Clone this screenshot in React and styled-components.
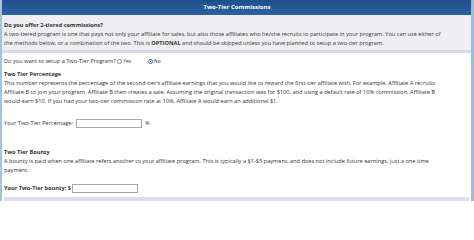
import React, { useState } from "react";
import styled, { createGlobalStyle } from "styled-components";

const GlobalStyle = createGlobalStyle`
  html, body {
    margin: 0;
    padding: 0;
    background: #fff;
  }
  body {
    font-family: "Open Sans", "DejaVu Sans", sans-serif;
    color: #333;
  }
`;

const Panel = styled.div`
  width: 474px;
  height: 201px;
  box-sizing: border-box;
  border-left: 2px solid #a9c3df;
  border-right: 3px solid #9dbbd9;
  display: flex;
  flex-direction: column;
  overflow: hidden;
  font-size: 5.65px;
  line-height: 9px;
`;

const Header = styled.div`
  height: 15px;
  flex-shrink: 0;
  display: flex;
  align-items: center;
  justify-content: center;
  background: linear-gradient(#1f4f8a, #2b62a1);
  color: #fff;
  font-weight: 700;
  font-size: 6px;
  margin: 0 -3px 0 -2px;
`;

const Intro = styled.div`
  background: #efeff2;
  border-bottom: 3px solid #d9d9ee;
  padding: 6px 2px 2px;
`;

const Body = styled.div`
  flex: 1;
  padding: 4px 2px 0;
  display: flex;
  flex-direction: column;
`;

const Title = styled.div`
  font-weight: 700;
  white-space: nowrap;
`;

const Text = styled.div`
  white-space: nowrap;
`;

const Row = styled.div`
  display: flex;
  align-items: center;
  white-space: nowrap;
  height: 9px;
  margin-top: ${(p) => p.$top || 0}px;
  font-weight: ${(p) => (p.$bold ? 700 : 400)};
`;

const Section = styled.div`
  margin-top: ${(p) => p.$top || 0}px;
`;

const Radio = styled.input`
  appearance: none;
  width: 5px;
  height: 5px;
  margin: 0 1px 0 ${(p) => p.$gap || 0}px;
  border-radius: 50%;
  border: 0.7px solid ${(p) => (p.checked ? "#3b73b5" : "#8a8a8a")};
  background: #fff;
  box-sizing: border-box;
  position: relative;
  &:checked::after {
    content: "";
    position: absolute;
    inset: 1px;
    border-radius: 50%;
    background: #333;
  }
`;

const RadioLabel = styled.span`
  font-size: 4.9px;
`;

const Field = styled.input`
  width: ${(p) => p.$w}px;
  height: 9px;
  box-sizing: border-box;
  border: 0.7px solid #a8a8a8;
  margin: 0 3px 0 ${(p) => p.$gap || 1}px;
  padding: 0;
  background: #fff;
`;

const Footer = styled.div`
  height: 4px;
  flex-shrink: 0;
  background: #dcdcf2;
  margin-top: auto;
`;

export default function App() {
  const [tier, setTier] = useState("no");
  return (
    <>
      <GlobalStyle />
      <Panel>
        <Header>Two-Tier Commissions</Header>
        <Intro>
          <Title>Do you offer 2-tiered commissions?</Title>
          <Text>
            A two-tiered program is one that pays not only your affiliate for sales, but also those affiliates who he/she recruits to participate in your program. You can use either of
            <br />
            the methods below, or a combination of the two. This is <b>OPTIONAL</b> and should be skipped unless you have planned to setup a two-tier program.
          </Text>
        </Intro>
        <Body>
          <Row>
            Do you want to setup a Two-Tier Program?
            <Radio
              type="radio"
              name="tier"
              $gap={1.5}
              checked={tier === "yes"}
              onChange={() => setTier("yes")}
            />
            <RadioLabel>Yes</RadioLabel>
            <Radio
              type="radio"
              name="tier"
              $gap={17}
              checked={tier === "no"}
              onChange={() => setTier("no")}
            />
            <RadioLabel>No</RadioLabel>
          </Row>
          <Section $top={4}>
            <Title>Two Tier Percentage</Title>
            <Text>
              This number represents the percentage of the second-tier's affiliate earnings that you would like to reward the first-tier affiliate with. For example, Affiliate A recruits
              <br />
              Affiliate B to join your program. Affiliate B then creates a sale. Assuming the original transaction was for $100, and using a default rate of 10% commission, Affiliate B
              <br />
              would earn $10. If you had your two-tier commission rate at 10%, Affiliate A would earn an additional $1.
            </Text>
          </Section>
          <Row $top={13}>
            Your Two-Tier Percentage:
            <Field type="text" $w={66} $gap={3} />%
          </Row>
          <Section $top={20}>
            <Title>Two Tier Bounty</Title>
            <Text>
              A bounty is paid when one affiliate refers another to your affiliate program. This is typically a $1-$5 payment, and does not include future earnings, just a one time
              <br />
              payment.
            </Text>
          </Section>
          <Row $top={9} $bold>
            Your Two-Tier bounty: $
            <Field type="text" $w={66} $gap={1.5} />
          </Row>
          <Footer />
        </Body>
      </Panel>
    </>
  );
}
